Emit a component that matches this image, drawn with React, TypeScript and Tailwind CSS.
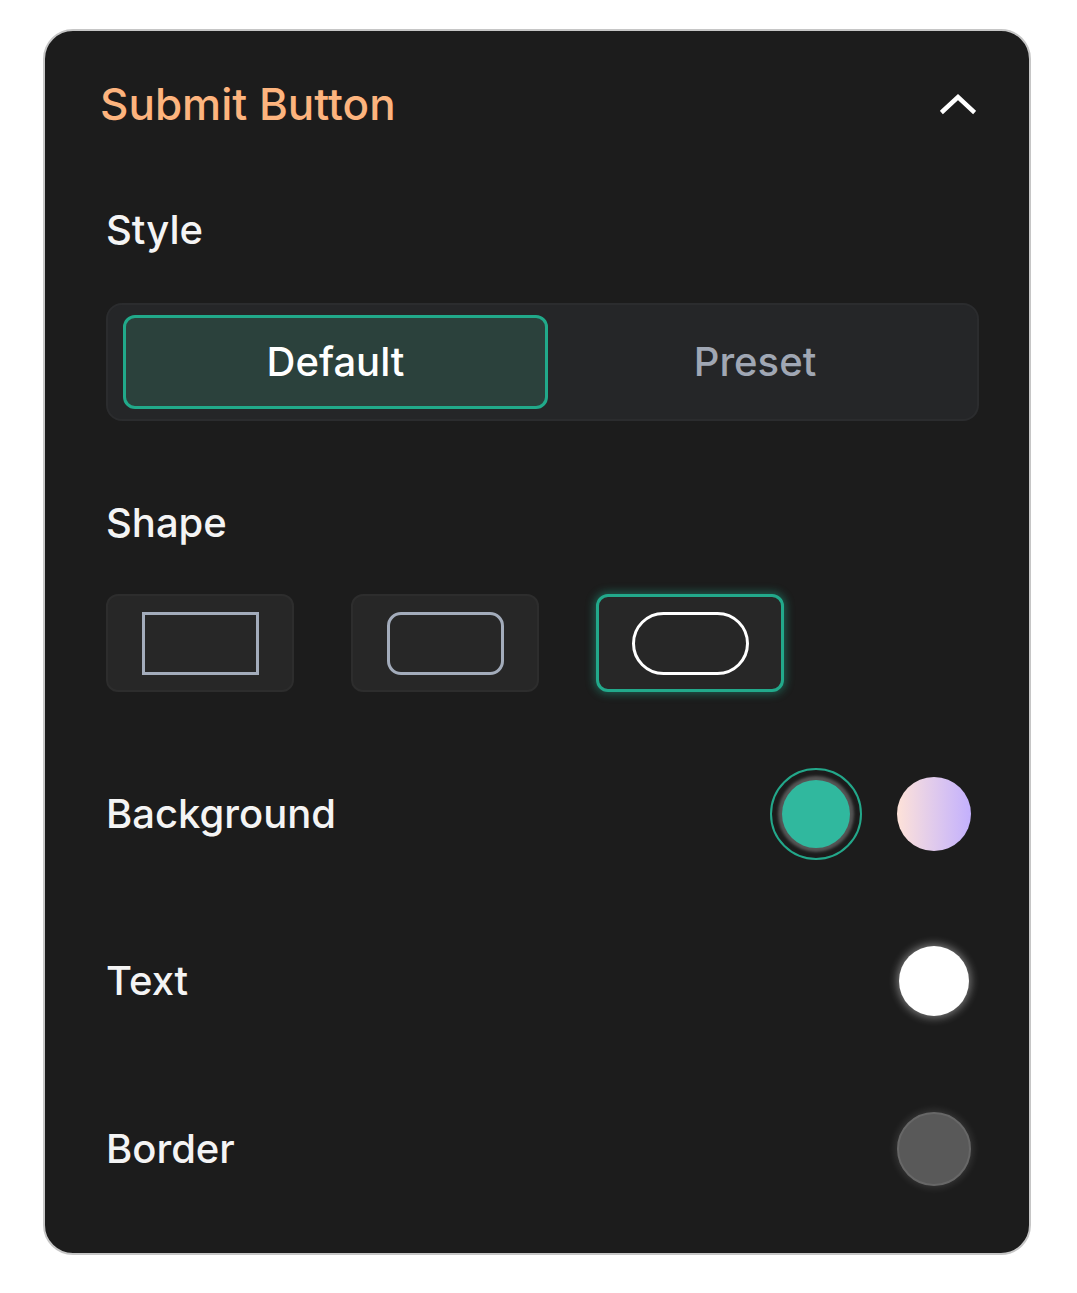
import React from 'react';

const font = { fontFamily: 'Inter, "Noto Sans", sans-serif' };

const ChevronUp = () => (
  <svg width="36" height="22" viewBox="0 0 36 22" fill="none">
    <path d="M3 18 L18 4 L33 18" stroke="#ffffff" strokeWidth="4.5" strokeLinecap="square" strokeLinejoin="miter" />
  </svg>
);

const ShapeTile = ({ radius, active }: { radius: string; active?: boolean }) => (
  <div
    className={
      active
        ? 'w-[188px] h-[98px] rounded-[12px] bg-[#272727] border-[3px] border-[#22a98b] shadow-[0_0_8px_2px_rgba(34,169,139,0.45)] flex items-center justify-center'
        : 'w-[188px] h-[98px] rounded-[12px] bg-[#272727] border-2 border-[#2d2d2d] flex items-center justify-center'
    }
  >
    <div
      className={
        active
          ? `w-[117px] h-[63px] ${radius} border-[3px] border-white`
          : `w-[117px] h-[63px] ${radius} border-[3px] border-[#a3acbb]`
      }
    />
  </div>
);

export default function App() {
  return (
    <div className="min-h-screen bg-white pt-[29px] pl-[43px]" style={font}>
      <div className="w-[988px] h-[1226px] rounded-[30px] border-2 border-[#c6c6c6] bg-[#1c1c1c] pt-[47px] pl-[61px] pr-[50px]">
        {/* header */}
        <div className="flex items-center justify-between h-[52px]">
          <h1 className="-ml-[6px] text-[44px] leading-[52px] font-medium text-[#fdb47e]">Submit Button</h1>
          <div className="mr-[3px]">
            <ChevronUp />
          </div>
        </div>

        {/* style */}
        <div className="mt-[76px] text-[40px] leading-[48px] font-medium text-[#f4f4f4]">Style</div>
        <div className="mt-[49px] h-[118px] rounded-[16px] bg-[#252628] border-2 border-[#2b2c2e] px-[15px] py-[10px] grid grid-cols-[425px_1fr]">
          <button className="rounded-[12px] bg-[#2b413c] border-[3px] border-[#21a98a] text-[40px] font-medium text-white">
            Default
          </button>
          <button className="rounded-[12px] text-[40px] font-medium text-[#a0a7b4]">Preset</button>
        </div>

        {/* shape */}
        <div className="mt-[78px] text-[40px] leading-[48px] font-medium text-[#f4f4f4]">Shape</div>
        <div className="mt-[47px] flex gap-[57px]">
          <ShapeTile radius="rounded-none" />
          <ShapeTile radius="rounded-[14px]" />
          <ShapeTile radius="rounded-full" active />
        </div>

        {/* colours */}
        <div className="mt-[76px] flex items-center justify-between h-[92px]">
          <span className="text-[40px] font-medium text-[#f4f4f4]">Background</span>
          <div className="flex items-center gap-[35px] mr-[8px]">
            <div className="w-[92px] h-[92px] rounded-full border-2 border-[#23a78a] bg-[#1c1c1c] flex items-center justify-center">
              <div className="w-[68px] h-[68px] rounded-full bg-[#30b89e] shadow-[0_0_3px_4px_rgba(105,105,105,0.75)]" />
            </div>
            <div className="w-[74px] h-[74px] rounded-full bg-gradient-to-r from-[#fee2d8] to-[#c3b0fd]" />
          </div>
        </div>

        <div className="mt-[75px] flex items-center justify-between h-[92px]">
          <span className="text-[40px] font-medium text-[#f4f4f4]">Text</span>
          <div className="w-[70px] h-[70px] rounded-full bg-white shadow-[0_0_8px_2px_rgba(255,255,255,0.4)] mr-[10px]" />
        </div>

        <div className="mt-[76px] flex items-center justify-between h-[92px]">
          <span className="text-[40px] font-medium text-[#f4f4f4]">Border</span>
          <div className="w-[74px] h-[74px] rounded-full bg-[#595959] border-2 border-[#676767] shadow-[0_0_8px_1px_rgba(255,255,255,0.15)] mr-[8px]" />
        </div>
      </div>
    </div>
  );
}
